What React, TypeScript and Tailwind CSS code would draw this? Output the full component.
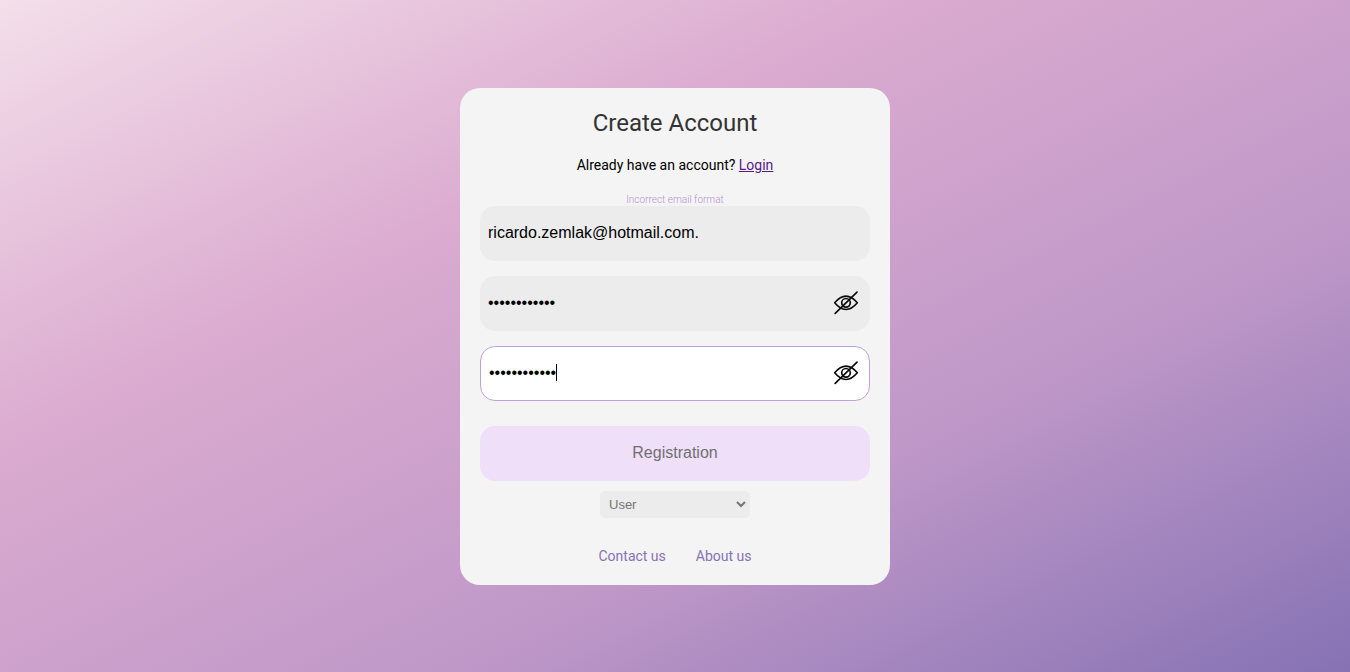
import { useState } from "react";

const fieldClass =
  "block h-[55px] w-full rounded-[15px] border-0 bg-[#ececec] px-2 pb-px font-['Liberation_Sans',Arial,sans-serif] text-base text-black outline-none focus:border focus:border-[#c1a0d8] focus:bg-white";

const bulletWidth = 5.6;

function EyeOffIcon() {
  return (
    <svg viewBox="0 0 26 24" className="h-6 w-[26px]" fill="none" stroke="#0a0a0a" strokeWidth="1.65" strokeLinecap="round" strokeLinejoin="round" aria-hidden="true">
      <path d="M1.7 11.8C4.600 8.300 8 5.100 13 5.100s8.400 3.200 11.300 6.700C21.400 15.300 18 18.500 13 18.500S4.600 15.300 1.700 11.800Z" />
      <circle cx="13" cy="11.800" r="4.300" />
      <path d="M2.200 22.400 24 1.100" />
    </svg>
  );
}

function PasswordField({ id, label, autoFocus }: { id: string; label: string; autoFocus?: boolean }) {
  const [value, setValue] = useState("abcdefghijkl");
  const [visible, setVisible] = useState(false);
  const [focused, setFocused] = useState(Boolean(autoFocus));
  const drawCaret = focused && !visible;
  return (
    <div className="relative">
      <input
        id={id}
        aria-label={label}
        type={visible ? "text" : "password"}
        value={value}
        autoFocus={autoFocus}
        onFocus={() => setFocused(true)}
        onBlur={() => setFocused(false)}
        onChange={(e) => setValue(e.target.value)}
        className={drawCaret ? `${fieldClass} caret-transparent` : fieldClass}
      />
      {drawCaret && (
        <span
          aria-hidden="true"
          className="pointer-events-none absolute top-[18px] h-[17px] w-px bg-black"
          style={{ left: Math.round(9 + value.length * bulletWidth) }}
        />
      )}
      <button
        type="button"
        aria-label="Toggle password visibility"
        onClick={() => setVisible(!visible)}
        className="absolute inset-y-0 right-[11px] flex items-center"
      >
        <EyeOffIcon />
      </button>
    </div>
  );
}

export default function App() {
  const [email, setEmail] = useState("ricardo.zemlak@hotmail.com.");
  return (
    <main className="flex min-h-screen items-center justify-center bg-[linear-gradient(to_bottom_right,#f4dfea,#dbabd0,#bf98c8,#8672b4)] font-[Roboto,sans-serif]">
      <form
        className="flex w-full max-w-[430px] flex-col rounded-[20px] bg-[#f4f4f4] px-5 pt-5 pb-[19px]"
        onSubmit={(e) => e.preventDefault()}
      >
        <h1 className="text-center text-2xl leading-[30px] text-[#333]">Create Account</h1>
        <p className="mt-4 text-center text-sm leading-[22px] text-black">
          Already have an account?{" "}
          <a href="#login" className="text-[#551a8b] underline">Login</a>
        </p>
        <p id="email-error" className="mt-[18px] text-center text-[10px] leading-3 font-light text-[#b892d3]">
          Incorrect email format
        </p>
        <div className="flex flex-col gap-[15px]">
          <input
            id="email"
            type="text"
            aria-label="Email"
            value={email}
            aria-describedby="email-error"
            onChange={(e) => setEmail(e.target.value)}
            className={fieldClass}
          />
          <PasswordField id="password" label="Password" />
          <PasswordField id="confirm" label="Confirm password" autoFocus />
        </div>
        <button
          type="submit"
          className="mt-[25px] h-[55px] w-full rounded-[15px] bg-[#efdff9] pb-px font-['Liberation_Sans',Arial,sans-serif] text-base text-[#707070]"
        >
          Registration
        </button>
        <select
          id="role"
          aria-label="Account type"
          className="mt-2.5 h-[27px] w-[150px] self-center rounded-[5px] border border-[#ececec] bg-[#ececec] px-1 font-['Liberation_Sans',Arial,sans-serif] text-[13px] text-[#757575]"
        >
          <option>User</option>
          <option>Company</option>
        </select>
        <nav className="mt-7 flex justify-center gap-[30px] text-sm leading-5 text-[#8672b4]">
          <a href="#contact">Contact us</a>
          <a href="#about">About us</a>
        </nav>
      </form>
    </main>
  );
}
